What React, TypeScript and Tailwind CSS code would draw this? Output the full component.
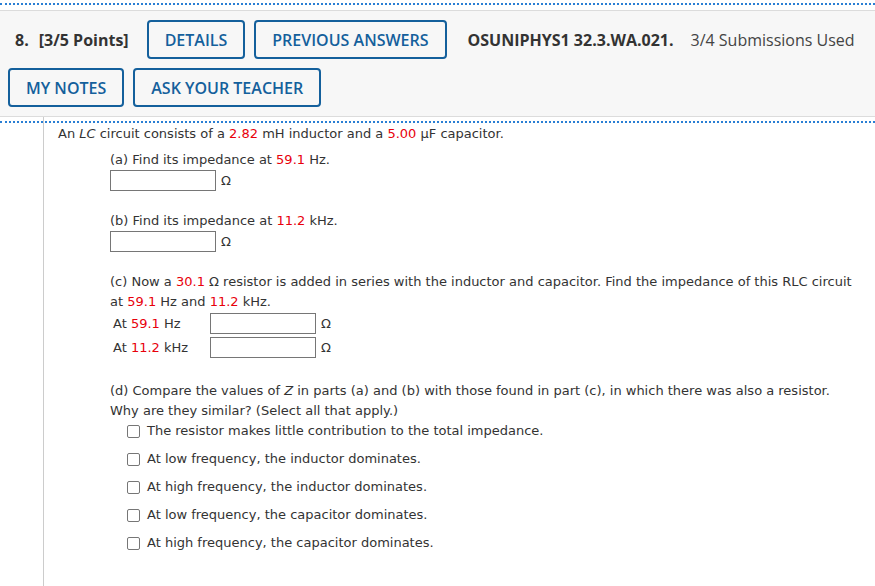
import React from "react";

const body = { fontFamily: "Verdana, 'DejaVu Sans', sans-serif" };
const head = { fontFamily: "'Open Sans', 'Noto Sans', sans-serif" };

function Num({ children }: { children: React.ReactNode }) {
  return <span className="text-[#e8000b]">{children}</span>;
}

function AnswerBox() {
  return (
    <input
      type="text"
      className="w-[106px] h-[21px] border border-[#767676] bg-white outline-none"
    />
  );
}

function HeadButton({ label }: { label: string }) {
  return (
    <button className="h-[39px] px-[16px] border-2 border-[#14609c] rounded-[4px] text-[16px] font-semibold text-[#14609c] leading-none">
      {label}
    </button>
  );
}

const choices = [
  "The resistor makes little contribution to the total impedance.",
  "At low frequency, the inductor dominates.",
  "At high frequency, the inductor dominates.",
  "At low frequency, the capacitor dominates.",
  "At high frequency, the capacitor dominates.",
];

export default function App() {
  return (
    <div className="w-[875px] h-[586px] bg-white overflow-hidden">
      <div className="pt-[3px]">
        <div className="border-t-2 border-dotted border-[#2a7fd4]" />
      </div>

      {/* Question header */}
      <div
        style={head}
        className="mt-[5px] h-[107px] bg-[#f7f7f7] border-y border-[#dcdcdc] pl-[8px] pt-[9px] flex flex-col gap-[9px]"
      >
        <div className="flex items-center gap-[9px]">
          <span className="ml-[7px] mr-[9px] text-[16px] font-bold text-[#333]">
            8.<span className="ml-[10px]">[3/5 Points]</span>
          </span>
          <HeadButton label="DETAILS" />
          <HeadButton label="PREVIOUS ANSWERS" />
          <span className="ml-[12px] text-[16px] font-bold text-[#333]">OSUNIPHYS1 32.3.WA.021.</span>
          <span className="ml-[8px] text-[16px] text-[#444]">3/4 Submissions Used</span>
        </div>
        <div className="flex items-center gap-[9px]">
          <HeadButton label="MY NOTES" />
          <HeadButton label="ASK YOUR TEACHER" />
        </div>
      </div>

      {/* Question body */}
      <div style={body} className="ml-[43px] h-[470px] border-l border-[#cccccc] text-[13px] leading-[20px] text-[#333]">
        <div className="pt-[4px]">
          <div className="-ml-[44px] border-t-2 border-dotted border-[#2a7fd4]" />
        </div>
        <div className="pl-[14px] pt-[1px]">
          <p>
            An <i>LC</i> circuit consists of a <Num>2.82</Num> mH inductor and a <Num>5.00</Num> μF capacitor.
          </p>

          <div className="ml-[52px]">
            <p className="mt-[6px]">
              (a) Find its impedance at <Num>59.1</Num> Hz.
            </p>
            <div className="flex items-center gap-[5px]">
              <AnswerBox />
              <span>Ω</span>
            </div>

            <p className="mt-[20px]">
              (b) Find its impedance at <Num>11.2</Num> kHz.
            </p>
            <div className="flex items-center gap-[5px]">
              <AnswerBox />
              <span>Ω</span>
            </div>

            <p className="mt-[20px]">
              (c) Now a <Num>30.1</Num> Ω resistor is added in series with the inductor and capacitor. Find the impedance of this RLC circuit
              <br />
              at <Num>59.1</Num> Hz and <Num>11.2</Num> kHz.
            </p>
            <div className="mt-[1px] flex flex-col gap-[3px]">
              <div className="flex items-center">
                <span className="ml-[3px] w-[97px]">
                  At <Num>59.1</Num> Hz
                </span>
                <AnswerBox />
                <span className="ml-[5px]">Ω</span>
              </div>
              <div className="flex items-center">
                <span className="ml-[3px] w-[97px]">
                  At <Num>11.2</Num> kHz
                </span>
                <AnswerBox />
                <span className="ml-[5px]">Ω</span>
              </div>
            </div>

            <p className="mt-[23px]">
              (d) Compare the values of <i>Z</i> in parts (a) and (b) with those found in part (c), in which there was also a resistor.
              <br />
              Why are they similar? (Select all that apply.)
            </p>
            <div className="ml-[17px] flex flex-col gap-[8px]">
              {choices.map((c) => (
                <label key={c} className="flex items-center gap-[7px]">
                  <span className="w-[13px] h-[13px] border border-[#767676] rounded-[2px] bg-white" />
                  <span>{c}</span>
                </label>
              ))}
            </div>
          </div>
        </div>
      </div>
    </div>
  );
}
